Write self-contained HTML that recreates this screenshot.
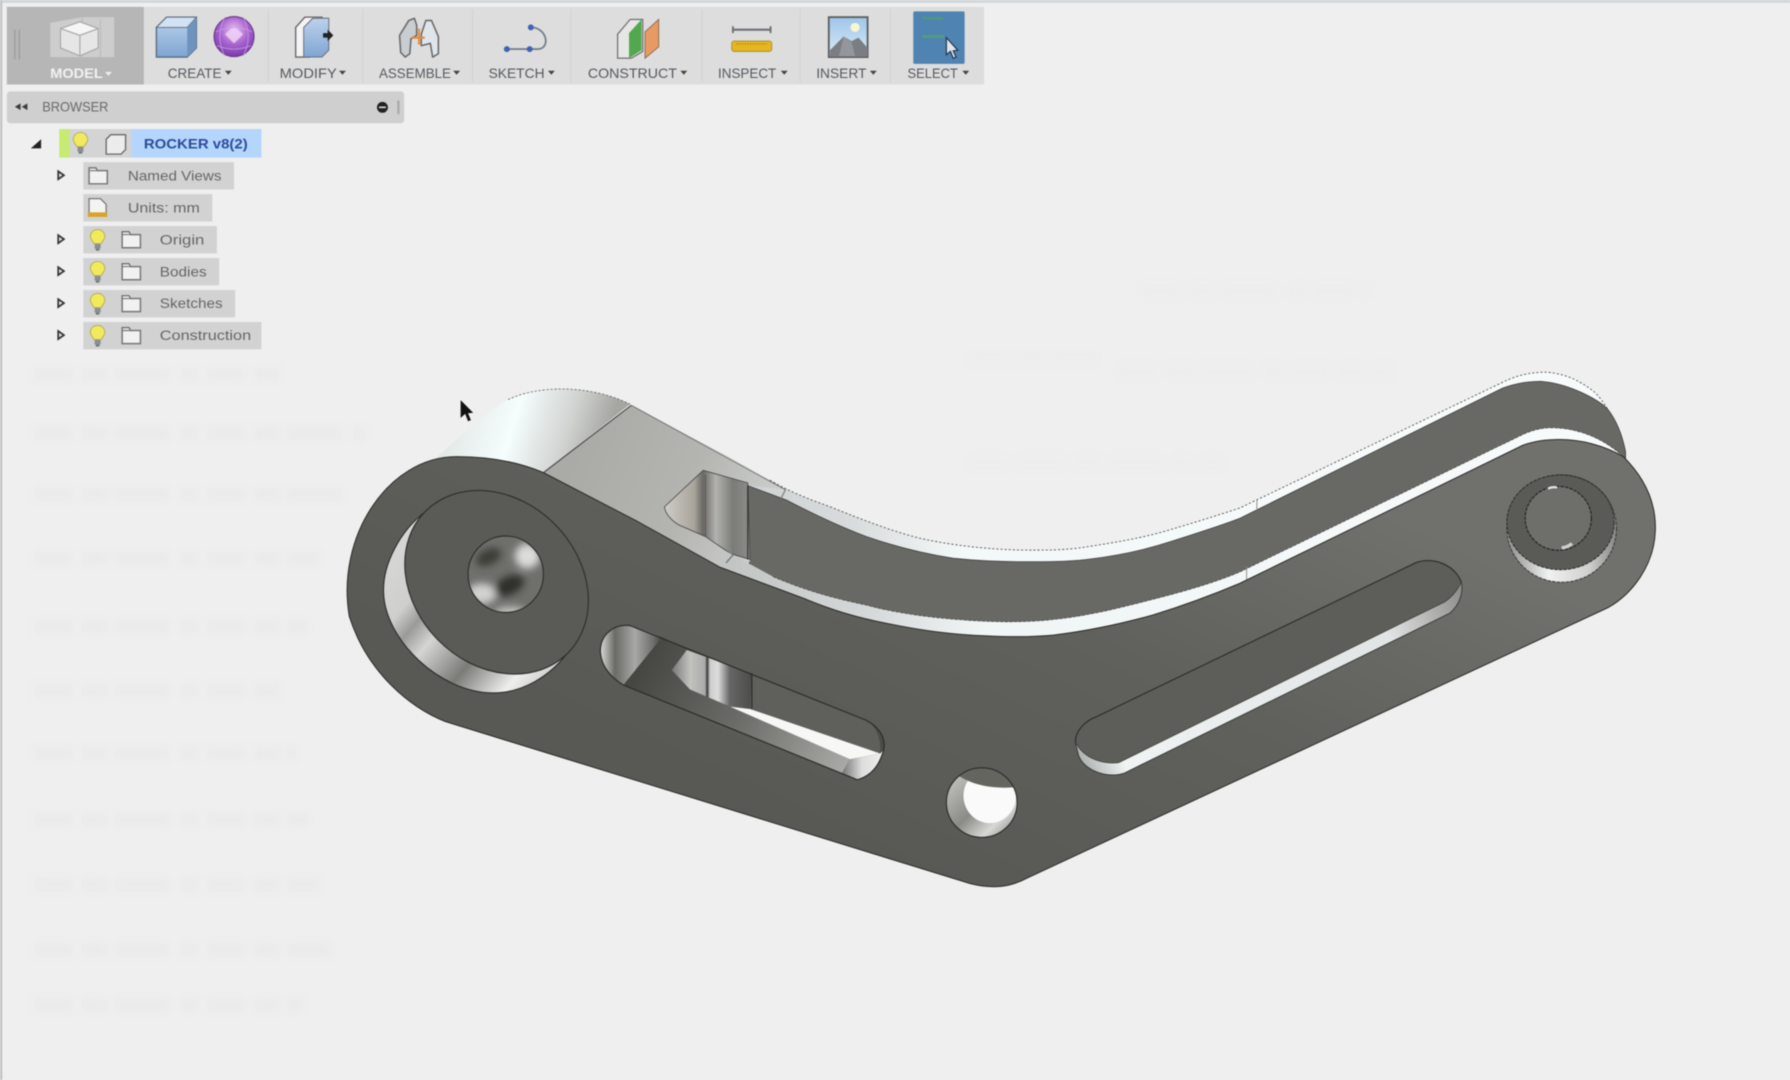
<!DOCTYPE html>
<html><head><meta charset="utf-8"><title>Fusion 360 Rocker</title>
<style>
html,body{margin:0;padding:0;width:1790px;height:1080px;overflow:hidden;background:#efefef}
svg{display:block;position:absolute;left:0;top:0;filter:blur(.5px)}
text{font-family:"Liberation Sans",sans-serif}
.l{font-size:12.5px;fill:#55585f}
</style></head><body>
<svg width="1790" height="1080" viewBox="0 0 1568 946" preserveAspectRatio="none" xmlns="http://www.w3.org/2000/svg">
<defs>
<linearGradient id="pl" gradientUnits="userSpaceOnUse" x1="1000" y1="350" x2="800" y2="780"><stop offset="0" stop-color="#70706c"/><stop offset=".45" stop-color="#60605c"/><stop offset="1" stop-color="#585854"/></linearGradient>
<linearGradient id="cyl" gradientUnits="userSpaceOnUse" x1="395" y1="365" x2="525" y2="405"><stop offset="0" stop-color="#e3e8e6"/><stop offset=".4" stop-color="#f5fdfd"/><stop offset=".75" stop-color="#d0d2d0"/><stop offset="1" stop-color="#a5a5a1"/></linearGradient>
<linearGradient id="gf" gradientUnits="userSpaceOnUse" x1="500" y1="400" x2="680" y2="470"><stop offset="0" stop-color="#aaaaa6"/><stop offset=".55" stop-color="#b4b4b0"/><stop offset="1" stop-color="#cfd2d1"/></linearGradient>
<linearGradient id="band" gradientUnits="userSpaceOnUse" x1="640" y1="0" x2="1430" y2="0"><stop offset="0" stop-color="#c2c5c4"/><stop offset=".15" stop-color="#d5d8d8"/><stop offset=".28" stop-color="#f0f5f5"/><stop offset="1" stop-color="#f8fbfb"/></linearGradient>
<linearGradient id="top" gradientUnits="userSpaceOnUse" x1="650" y1="0" x2="1425" y2="0"><stop offset="0" stop-color="#cfd3d3"/><stop offset=".12" stop-color="#d8dbdb"/><stop offset=".25" stop-color="#f3f8f8"/><stop offset="1" stop-color="#f8fbfb"/></linearGradient>
<linearGradient id="win" gradientUnits="userSpaceOnUse" x1="582" y1="0" x2="657" y2="0"><stop offset="0" stop-color="#cfcdc6"/><stop offset=".35" stop-color="#a8a49c"/><stop offset=".45" stop-color="#6a6864"/><stop offset=".6" stop-color="#b2b2ae"/><stop offset=".8" stop-color="#7b7b77"/><stop offset="1" stop-color="#8d8d89"/></linearGradient>
<linearGradient id="cb" gradientUnits="userSpaceOnUse" x1="335" y1="470" x2="500" y2="610"><stop offset="0" stop-color="#d9d9d7"/><stop offset=".25" stop-color="#cfcfcd"/><stop offset=".33" stop-color="#9a9a97"/><stop offset=".42" stop-color="#d5d5d3"/><stop offset=".6" stop-color="#7b7b78"/><stop offset=".78" stop-color="#eeeeec"/><stop offset="1" stop-color="#a9a9a6"/></linearGradient>
<linearGradient id="sl" gradientUnits="userSpaceOnUse" x1="527" y1="570" x2="580" y2="570"><stop offset="0" stop-color="#d0d0ce"/><stop offset=".22" stop-color="#6a6a66"/><stop offset=".55" stop-color="#a8a8a5"/><stop offset=".85" stop-color="#6f6f6c"/><stop offset="1" stop-color="#444"/></linearGradient>
<linearGradient id="sw" gradientUnits="userSpaceOnUse" x1="588.500" y1="0" x2="658" y2="0"><stop offset="0" stop-color="#777"/><stop offset=".23" stop-color="#c2c2be"/><stop offset=".42" stop-color="#aaa"/><stop offset=".445" stop-color="#333"/><stop offset=".48" stop-color="#ccc"/><stop offset=".58" stop-color="#ddd"/><stop offset=".73" stop-color="#666"/><stop offset="1" stop-color="#4d4d4a"/></linearGradient>
<linearGradient id="sb" gradientUnits="userSpaceOnUse" x1="560" y1="575" x2="738" y2="677"><stop offset="0" stop-color="#444441"/><stop offset=".5" stop-color="#6b6b68"/><stop offset="1" stop-color="#a9a9a6"/></linearGradient>
<linearGradient id="cap" gradientUnits="userSpaceOnUse" x1="738" y1="670" x2="772" y2="670"><stop offset="0" stop-color="#777"/><stop offset=".5" stop-color="#ddd"/><stop offset="1" stop-color="#eee"/></linearGradient>
<linearGradient id="s2" gradientUnits="userSpaceOnUse" x1="945" y1="670" x2="1280" y2="520"><stop offset="0" stop-color="#a8abab"/><stop offset=".1" stop-color="#f0f3f3"/><stop offset=".8" stop-color="#e2e5e5"/><stop offset="1" stop-color="#8f8f8c"/></linearGradient>
<linearGradient id="sh" x1="0" y1="0" x2="1" y2="1"><stop offset="0" stop-color="#d0d0cd"/><stop offset=".5" stop-color="#8a8a86"/><stop offset=".75" stop-color="#d8d8d6"/><stop offset="1" stop-color="#7a7a78"/></linearGradient>
<linearGradient id="cr" gradientUnits="userSpaceOnUse" x1="1325" y1="490" x2="1415" y2="490"><stop offset="0" stop-color="#9a9a98"/><stop offset=".35" stop-color="#f0f2f2"/><stop offset=".75" stop-color="#cfcfcd"/><stop offset="1" stop-color="#8a8a88"/></linearGradient>
<linearGradient id="bx" x1="0" y1="0" x2="0" y2="1"><stop offset="0" stop-color="#bcd2ec"/><stop offset="1" stop-color="#7fa5d2"/></linearGradient>
<radialGradient id="sph" cx=".5" cy=".35" r=".7"><stop offset="0" stop-color="#ecc4f2"/><stop offset=".5" stop-color="#a864d0"/><stop offset="1" stop-color="#7434a8"/></radialGradient>
<linearGradient id="sky" x1="0" y1="0" x2="0" y2="1"><stop offset="0" stop-color="#9dc6ea"/><stop offset="1" stop-color="#dcecf6"/></linearGradient>
<clipPath id="hc"><ellipse cx="443" cy="503" rx="33" ry="33.500"/></clipPath>
<filter id="b3" x="-30%" y="-30%" width="160%" height="160%"><feGaussianBlur stdDeviation="3.500"/></filter>
<symbol id="bulb" viewBox="0 0 16 20"><path d="M8 1C4 1 2 4 2 6.800c0 2.500 2 3.600 3 6h6c1-2.400 3-3.500 3-6C14 4 12 1 8 1z" fill="#f2ea5e" stroke="#b9b35c" stroke-width=".9"/><rect x="5.500" y="13" width="5" height="4" fill="#8a8f96"/><rect x="6.500" y="17" width="3" height="1.600" fill="#6a7078"/></symbol>
<symbol id="fold" viewBox="0 0 18 16"><path d="M1 3.500V15H17V3.500H8.500L7 1H1Z" fill="#f1f1f1" stroke="#777" stroke-width="1.300"/><path d="M1 3.500H8.500" stroke="#777"/></symbol>
</defs>

<rect width="1568" height="946" fill="#efefef"/>
<rect x="0" y="0" width="1568" height="2.500" fill="#d2d6da"/>
<rect x="0" y="0" width="2" height="946" fill="#c4c4c4"/>

<!-- ghost texture -->
<g stroke="#ebebeb" stroke-width="13" fill="none" stroke-dasharray="34 8 22 6 48 10 16 7" style="filter:blur(2.500px)">
<path d="M30 328H250M30 380H320M30 433H300M30 489H280M30 549H270M30 605H250M30 660H260M30 718H270M30 775H280M30 832H290M30 880H265"/>
<path d="M1000 255H1200M980 325H1220M900 405H1070M850 315H960M850 405H930" stroke="#ededed"/>
</g>

<!-- toolbar -->
<rect x="6" y="6" width="856" height="68" fill="#dddddd"/>
<rect x="6" y="6" width="120" height="68" fill="#b6b6b6"/>
<g stroke="#d3d3d3" stroke-width="1"><line x1="235" y1="8" x2="235" y2="72"/><line x1="318" y1="8" x2="318" y2="72"/><line x1="414" y1="8" x2="414" y2="72"/><line x1="500" y1="8" x2="500" y2="72"/><line x1="615" y1="8" x2="615" y2="72"/><line x1="701" y1="8" x2="701" y2="72"/><line x1="780" y1="8" x2="780" y2="72"/></g>
<g stroke="#9d9d9d" stroke-width="1.200"><line x1="13" y1="26" x2="13" y2="52"/><line x1="17" y1="26" x2="17" y2="52"/></g>

<!-- model icon -->
<g>
<path d="M44 20L72 15H100V50H44Z" fill="#cdcdcd"/>
<path d="M72 15V50M88 17V50" stroke="#bcbcbc"/>
<path d="M53 25L70 19L86 25V42L70 49L53 42Z" fill="#e6e6e6" stroke="#a8a8a8"/>
<path d="M53 25L70 31L86 25M70 31V49" fill="none" stroke="#a8a8a8"/>
<path d="M55 25L70 20L84 25L70 30Z" fill="#f6f6f6"/>
</g>
<text x="44" y="68.500" font-size="12.500" font-weight="bold" fill="#f2f2f2" textLength="46" lengthAdjust="spacingAndGlyphs">MODEL</text>
<path d="M92 63h6l-3 3.500z" fill="#eee"/>

<!-- box -->
<path d="M137 24L146 15H172V42L164 50H137Z" fill="url(#bx)" stroke="#5a6a80" stroke-width="1.200"/>
<path d="M137 24H164L172 15H146Z" fill="#d3e2f2" stroke="#5a6a80" stroke-width=".8"/>
<path d="M164 24L172 15V42L164 50Z" fill="#6f93bd"/>
<!-- sphere -->
<circle cx="205" cy="32" r="17.500" fill="url(#sph)" stroke="#6a3a8a" stroke-width="1"/>
<path d="M205 23L213 30L205 38L197 30Z" fill="#eccdf4" opacity=".9"/>
<path d="M189 28Q205 20 221 28M190 40Q205 46 220 40M197 15Q188 32 197 49M213 15Q222 32 213 49" fill="none" stroke="#c89ae0" stroke-width=".7"/>
<!-- modify -->
<path d="M259 24L267 15H282V20L271 50H259Z" fill="#f4f4f4" stroke="#666" stroke-width="1.200"/>
<path d="M266 24L274 16H288V44L282 50H266Z" fill="url(#bx)" stroke="#667" stroke-width=".8"/>
<path d="M283 29h4v-3l5 5-5 5v-3h-4z" fill="#222"/>
<!-- assemble -->
<path d="M351 46L350 31L358 18L363 16L365 22V31L360 34L359 47L355 50Z" fill="#c9ccd0" stroke="#666" stroke-width="1.300" stroke-linejoin="round"/>
<path d="M369 30L373 18L378 18L384 32V47L379 50L377 38L369 40Z" fill="#dfe5ea" stroke="#666" stroke-width="1.300" stroke-linejoin="round"/>
<path d="M361 33H372M367 25V39" stroke="#e58a3a" stroke-width="1.800"/>
<!-- sketch -->
<path d="M443 43H471M466 24C480 25 482 43 471 43" fill="none" stroke="#76808e" stroke-width="1.600"/>
<circle cx="444" cy="43" r="2.600" fill="#3f62b4"/><circle cx="464" cy="43" r="2.600" fill="#3f62b4"/><circle cx="465" cy="24" r="2.600" fill="#3f62b4"/>
<!-- construct -->
<path d="M541 30L552 17H563V45L553 51H541Z" fill="#e6e6e6" stroke="#666" stroke-width="1"/>
<path d="M551 29L562 17V44L551 51Z" fill="#53a84f"/>
<path d="M565 51V28L577 17V41Z" fill="#e79a63" stroke="#8a6a50" stroke-width=".8"/>
<!-- inspect -->
<path d="M642 26H675" stroke="#6e7076" stroke-width="1.800"/><path d="M642 23v6M675 23v6" stroke="#6e7076" stroke-width="1.600"/>
<rect x="641" y="36" width="35" height="9" rx="2" fill="#e7b520" stroke="#a68a30" stroke-width=".8"/>
<path d="M645 38.500h27" stroke="#b58e1c" stroke-width="1.500" stroke-dasharray="1.200 1.200"/>
<!-- insert -->
<rect x="726" y="15" width="34" height="35" fill="url(#sky)" stroke="#5d5d5d" stroke-width="1.600"/>
<circle cx="749" cy="24" r="4" fill="#fbf6cf"/>
<path d="M727 44L739 32L746 36L752 33L760 42V49H727Z" fill="#7b7d84"/>
<path d="M739 32L746 37L749 49H735Z" fill="#94969c"/>
<!-- select -->
<rect x="800" y="10" width="45" height="46" rx="1.500" fill="#4f83b1"/>
<path d="M808 16H826" stroke="#4e9a7a" stroke-width="2.200"/>
<path d="M808 32H827" stroke="#4fa07c" stroke-width="2.200"/>
<path d="M829 33L829 48L832.500 45L835 51L837.500 50L835 44.500L839 44Z" fill="#dfe6ee" stroke="#1e3148" stroke-width="1"/>

<text class="l" x="147" y="68.500" textLength="47" lengthAdjust="spacingAndGlyphs">CREATE</text>
<text class="l" x="245" y="68.500" textLength="50" lengthAdjust="spacingAndGlyphs">MODIFY</text>
<text class="l" x="332" y="68.500" textLength="63" lengthAdjust="spacingAndGlyphs">ASSEMBLE</text>
<text class="l" x="428" y="68.500" textLength="49" lengthAdjust="spacingAndGlyphs">SKETCH</text>
<text class="l" x="515" y="68.500" textLength="78" lengthAdjust="spacingAndGlyphs">CONSTRUCT</text>
<text class="l" x="629" y="68.500" textLength="51" lengthAdjust="spacingAndGlyphs">INSPECT</text>
<text class="l" x="715" y="68.500" textLength="44" lengthAdjust="spacingAndGlyphs">INSERT</text>
<text class="l" x="795" y="68.500" textLength="44" lengthAdjust="spacingAndGlyphs">SELECT</text>
<g fill="#444"><path d="M197 62h6l-3 3.500z"/><path d="M297 62h6l-3 3.500z"/><path d="M397 62h6l-3 3.500z"/><path d="M480 62h6l-3 3.500z"/><path d="M596 62h6l-3 3.500z"/><path d="M684 62h6l-3 3.500z"/><path d="M762 62h6l-3 3.500z"/><path d="M843 62h6l-3 3.500z"/></g>

<!-- browser -->
<rect x="6" y="80" width="348" height="28" rx="3" fill="#cfcfcf"/>
<path d="M18 90.500v6l-5-3zM24 90.500v6l-5-3z" fill="#3c3c3c"/>
<text x="37" y="97.500" font-size="12.500" fill="#6a6a6a" textLength="58" lengthAdjust="spacingAndGlyphs">BROWSER</text>
<circle cx="335" cy="94" r="4.800" fill="#222"/><rect x="332" y="93.300" width="6" height="1.400" fill="#ddd"/>
<rect x="348" y="88" width="2" height="12" fill="#aaa"/>

<path d="M27 130h9v-8z" fill="#222"/>
<rect x="52" y="113" width="176" height="25" fill="#d4d4d4"/>
<rect x="52" y="113" width="9" height="25" fill="#c6ea72"/>
<rect x="115" y="113" width="114" height="25" fill="#b5d6fc"/>
<use href="#bulb" x="62" y="115" width="17" height="21"/>
<path d="M93 122L97 118H110V131L106 135H93Z" fill="#ececec" stroke="#6a6a6a" stroke-width="1.200" stroke-linejoin="round"/>
<text x="126" y="130" font-size="12.500" font-weight="bold" fill="#2c4b9c" textLength="91" lengthAdjust="spacingAndGlyphs">ROCKER v8(2)</text>

<g fill="#d2d2d2">
<rect x="73" y="142" width="132" height="24"/>
<rect x="73" y="170" width="113" height="24"/>
<rect x="73" y="198" width="117" height="24"/>
<rect x="73" y="226" width="119" height="24"/>
<rect x="73" y="254" width="133" height="24"/>
<rect x="73" y="282" width="156" height="24"/>
</g>
<g fill="#e2e2e2" stroke="#333" stroke-width="1.500">
<path d="M51 150v7l5-3.500z"/><path d="M51 206v7l5-3.500z"/><path d="M51 234v7l5-3.500z"/><path d="M51 262v7l5-3.500z"/><path d="M51 290v7l5-3.500z"/>
</g>
<use href="#fold" x="77" y="146" width="18" height="16"/>
<path d="M78 187V174H88L93 179V187Z" fill="#f3f3f3" stroke="#777" stroke-width="1.100"/>
<rect x="77" y="186" width="17" height="4" fill="#d9a324"/>
<use href="#bulb" x="77" y="200" width="17" height="21"/><use href="#fold" x="106" y="202" width="18" height="16"/>
<use href="#bulb" x="77" y="228" width="17" height="21"/><use href="#fold" x="106" y="230" width="18" height="16"/>
<use href="#bulb" x="77" y="256" width="17" height="21"/><use href="#fold" x="106" y="258" width="18" height="16"/>
<use href="#bulb" x="77" y="284" width="17" height="21"/><use href="#fold" x="106" y="286" width="18" height="16"/>
<g fill="#666" font-size="12.500">
<text x="112" y="158" textLength="82" lengthAdjust="spacingAndGlyphs">Named Views</text>
<text x="112" y="186" textLength="63" lengthAdjust="spacingAndGlyphs">Units: mm</text>
<text x="140" y="214" textLength="39" lengthAdjust="spacingAndGlyphs">Origin</text>
<text x="140" y="242" textLength="41" lengthAdjust="spacingAndGlyphs">Bodies</text>
<text x="140" y="270" textLength="55" lengthAdjust="spacingAndGlyphs">Sketches</text>
<text x="140" y="298" textLength="80" lengthAdjust="spacingAndGlyphs">Construction</text>
</g>

<!-- cursor -->
<path d="M403.500 350.500L403.500 366L407.500 362.500L410 369L412.500 368L410 362L414.500 361.500Z" fill="#111"/>

<!-- PART -->
<!-- top light band silhouette -->
<path d="M553 355L638 400L674.500 420.500C690 430 708 437 727 443.800C755 455 780 465 806 471.500C835 478 865 481 893.500 481.800C915 482 935 482 952 479C978 475 1002 471 1025 464C1045 458 1065 452 1086 445L1316 335C1330 328 1342 326 1355 326C1375 328 1385 335 1395 342C1405 350 1418 372 1424 396V410L1100 560L660 500Z" fill="url(#top)"/>
<path d="M674.500 420.500C690 430 708 437 727 443.800C755 455 780 465 806 471.500C835 478 865 481 893.500 481.800C915 482 935 482 952 479C978 475 1002 471 1025 464C1045 458 1065 452 1086 445L1316 335C1330 328 1342 326 1355 326C1375 328 1385 335 1395 342C1405 350 1418 372 1424 396" fill="none" stroke="#555" stroke-width=".8" stroke-dasharray="1.800 1.800"/>
<!-- back plate -->
<path d="M654 425L689 438C712 450 735 461 759 470C785 479 810 485 835 489C855 491 875 492 893.500 492C915 492 935 492 952 490C978 487 1002 482 1025 474.500C1045 468 1065 462 1086 454L1316 340C1330 335 1340 334 1350 334C1375 336 1400 350 1408 358C1416 368 1421 380 1424 396V420L1000 600L657 510Z" fill="#686864" stroke="#333" stroke-width=".6"/>
<!-- flat grey face -->
<path d="M476 414L553 355L688 429L654 425L657 492L631 497Z" fill="url(#gf)"/>
<path d="M553 355L688 429" stroke="#666" stroke-width=".7"/>
<!-- window -->
<path d="M582 444L616 412L655 423L657 490L640 485L618 470L595 460C588 456 583 450 582 444Z" fill="url(#win)" stroke="#444" stroke-width=".7"/>
<line x1="655" y1="425" x2="655" y2="490" stroke="#2e2e2c" stroke-width="1"/>
<line x1="618" y1="416" x2="618" y2="470" stroke="#55534e" stroke-width=".7"/>
<!-- cylinder -->
<path d="M380 403C400 385 420 365 445 350C470 338 515 336 552 354L476 414C455 405 430 400 400 400Z" fill="url(#cyl)"/>
<path d="M445 350C470 338 515 336 552 354" fill="none" stroke="#666" stroke-width=".7" stroke-dasharray="2 1.500"/>
<line x1="476" y1="414" x2="553" y2="355" stroke="#444" stroke-width="1"/>
<line x1="688" y1="429" x2="684" y2="437" stroke="#777" stroke-width="1"/>
<!-- front band -->
<path d="M631 480L677 505C705 517 730 524 759 530C785 537 815 541 844 543C870 545 890 545 911 543.700C945 541 970 535 996 528.500C1030 520 1060 512 1086 501L1331 382C1345 375 1355 374 1366 375C1390 377 1410 388 1424 402L1420 440L1100 620L860 650L631 560Z" fill="url(#band)"/>
<path d="M677 505C705 517 730 524 759 530C785 537 815 541 844 543C870 545 890 545 911 543.700C945 541 970 535 996 528.500C1030 520 1060 512 1086 501L1331 382C1345 375 1355 374 1366 375C1390 377 1410 388 1424 402" fill="none" stroke="#444" stroke-width=".6" stroke-dasharray="3 1"/>
<line x1="636" y1="493" x2="643" y2="485" stroke="#666" stroke-width="1"/>
<line x1="1092" y1="496" x2="1092" y2="508" stroke="#888" stroke-width=".8"/>
<line x1="1101" y1="438" x2="1101" y2="447" stroke="#888" stroke-width=".8"/>
<!-- front plate -->
<path d="M400 400C430 400 455 405 476 414L557 456L631 497L703.800 524C725 533 750 541 776.700 546C805 552 835 556 864 557C885 558 905 558 922.600 556.300C950 553 980 547 1010 538.700C1035 531 1060 522 1086 511L1334 390C1345 386 1355 385 1366 385C1385 385 1405 390 1422 400C1440 418 1451 440 1450 465C1449 495 1430 520 1409 532L900 769C885 777 870 779 850 774L390 632C360 620 322 590 306 540C294 470 340 400 400 400Z" fill="url(#pl)" stroke="#2c2c2a" stroke-width=".9"/>

<!-- left counterbore -->
<path d="M373 448C350 465 335 495 336 519C337 560 385 607 432 607C458 607 482 592 497 572L435 510Z" fill="url(#cb)" stroke="#2e2e2c" stroke-width="1"/>
<ellipse cx="435" cy="510" rx="88" ry="72" transform="rotate(45 435 510)" fill="#5a5a57" stroke="#2e2e2c" stroke-width="1"/>
<g clip-path="url(#hc)">
<rect x="405" y="465" width="76" height="76" fill="#6f6f6c"/>
<g filter="url(#b3)">
<ellipse cx="462" cy="487" rx="11" ry="11" fill="#dcdcd9"/>
<ellipse cx="422" cy="520" rx="13" ry="9" fill="#d2d2cf"/>
<ellipse cx="447" cy="536" rx="14" ry="4" fill="#d0d0cd"/>
<ellipse cx="446" cy="513" rx="14" ry="8" transform="rotate(-25 446 513)" fill="#2d2d2a"/>
<ellipse cx="428" cy="488" rx="12" ry="7" transform="rotate(-25 428 488)" fill="#3c3c39"/>
</g>
</g>
<ellipse cx="443" cy="503" rx="33" ry="33.500" fill="none" stroke="#2e2e2c" stroke-width="1"/>

<!-- left slot -->
<path d="M526 572C525 556 538 546 552 548L759 631C772 638 776 648 774 657C770 672 762 680 751 683L546 600C533 592 527 582 526 572Z" fill="#4b4b48"/>
<path d="M580 558L601.600 569.400L588.500 587L604.400 604L639.500 619L744.600 665L737.600 677L751 683L546 600Z" fill="url(#sb)"/>
<path d="M526 572C525 556 538 546 552 548L580 558L546 600C533 592 527 582 526 572Z" fill="url(#sl)"/>
<path d="M601.600 569.400L658.600 589.800V621L639.500 619L604.400 604L588.500 587Z" fill="url(#sw)"/>
<path d="M658.600 589.800L759 631C768 636 772 648 771 660L657 621Z" fill="#5f5f5b"/>
<path d="M639.500 619L657 621L771 660L744.600 665Z" fill="#f7f7f5"/>
<path d="M744.600 665L771 660L774 657C770 672 762 680 751 683L737.600 677Z" fill="url(#cap)"/>
<line x1="658.600" y1="589.800" x2="658.600" y2="621" stroke="#2a2a28" stroke-width="1"/>
<path d="M526 572C525 556 538 546 552 548L759 631C772 638 776 648 774 657C770 672 762 680 751 683L546 600C533 592 527 582 526 572Z" fill="none" stroke="#2a2a28" stroke-width="1"/>

<!-- right slot -->
<path d="M942 650C942 640 950 632 960 628L1240 493C1255 487 1275 495 1280 510C1282 520 1278 530 1270 537L985 677C970 682 950 675 945 662Z" fill="#5d5d59" stroke="#2c2c2a" stroke-width="1"/>
<path d="M942 650C948 662 962 670 980 668L1266 527C1272 523 1278 515 1280 510C1282 520 1278 530 1270 537L985 677C970 682 950 675 945 662Z" fill="url(#s2)" stroke="#3a3a38" stroke-width=".6"/>

<!-- small hole -->
<clipPath id="ch"><ellipse cx="860" cy="703" rx="31" ry="30.500"/></clipPath>
<ellipse cx="860" cy="703" rx="31" ry="30.500" fill="url(#sh)"/>
<g clip-path="url(#ch)">
<ellipse cx="867" cy="697" rx="23" ry="24" fill="#fafafa"/>
<ellipse cx="880" cy="664" rx="50" ry="26" fill="#65655f"/>
</g>
<ellipse cx="860" cy="703" rx="31" ry="30.500" fill="none" stroke="#2c2c2a" stroke-width="1"/>

<!-- right boss -->
<ellipse cx="1368" cy="463" rx="48" ry="47" fill="url(#cr)" stroke="#3a3a38" stroke-width=".9" stroke-dasharray="3 1"/>
<ellipse cx="1367" cy="457.500" rx="47" ry="41.500" fill="#5a5a57" stroke="#2c2c2a" stroke-width=".9" stroke-dasharray="3 1"/>
<ellipse cx="1365" cy="454" rx="29" ry="28" fill="#6e6e6a" stroke="#222" stroke-width="1" stroke-dasharray="3 1"/>
<path d="M1356 428q4-2 8-1" stroke="#e6e6e6" stroke-width="2" fill="none"/>
<path d="M1368 480q6-1 9-4" stroke="#cfcfcb" stroke-width="3" fill="none"/>
</svg>
</body></html>
